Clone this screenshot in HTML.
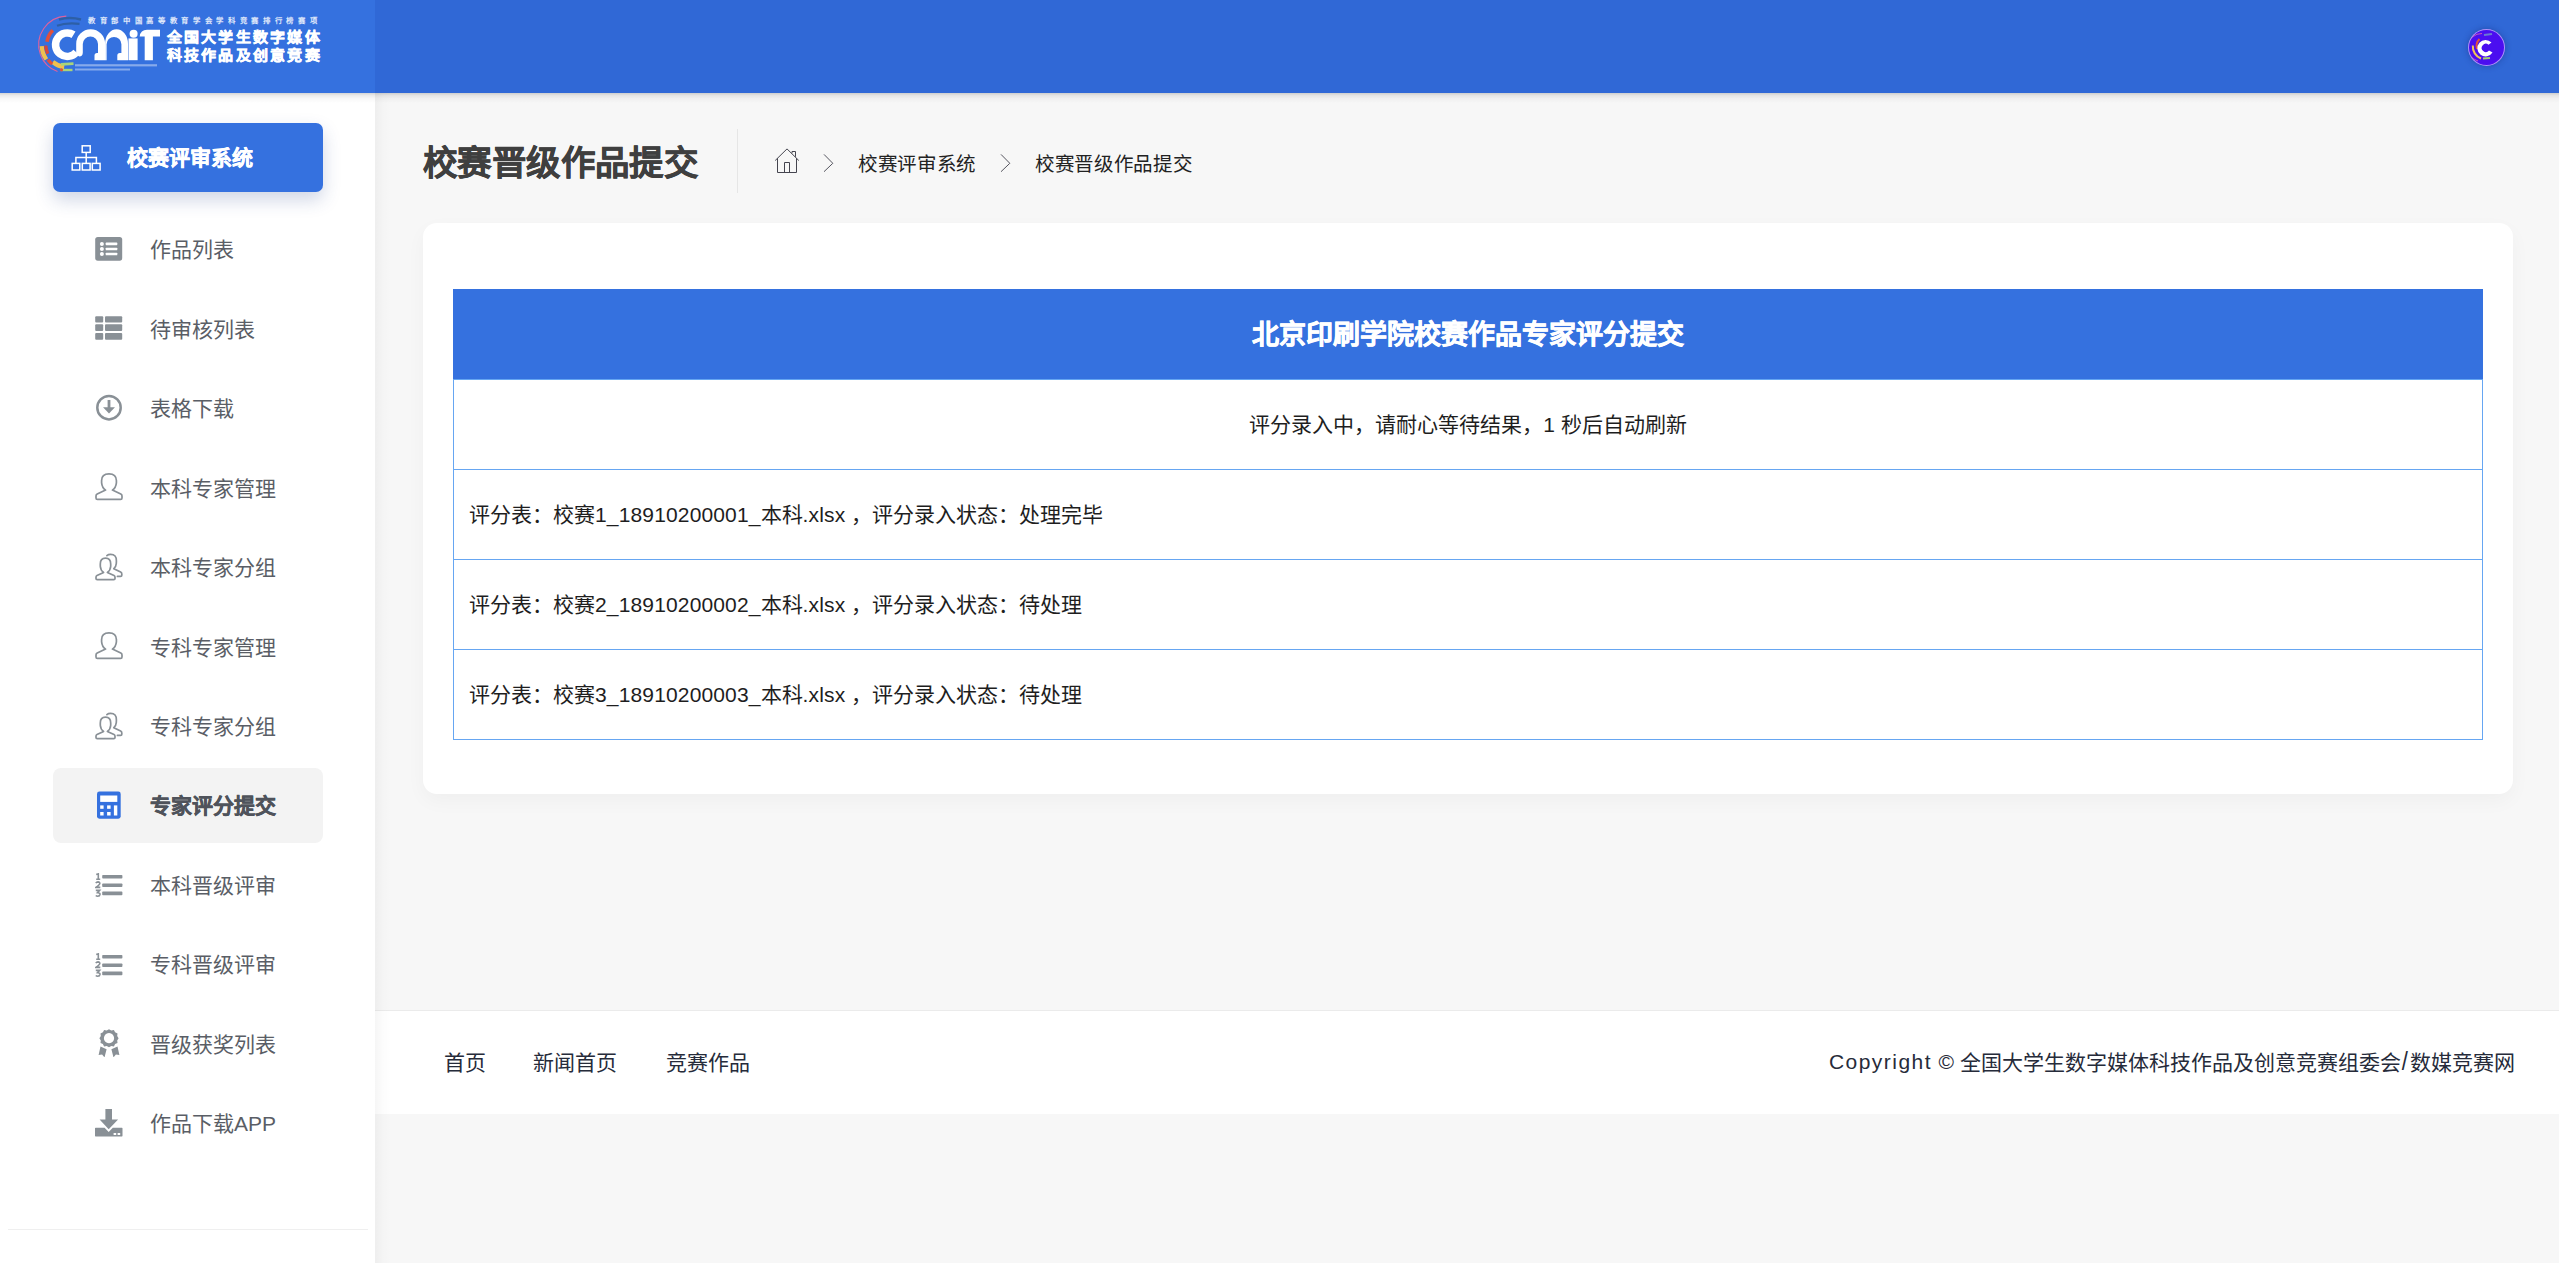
<!DOCTYPE html>
<html lang="zh-CN">
<head>
<meta charset="utf-8">
<style>
*{box-sizing:border-box;margin:0;padding:0}
html,body{width:2559px;height:1263px;overflow:hidden}
body{background:#f7f7f7;font-family:"Liberation Sans",sans-serif;position:relative;color:#333}
.abs{position:absolute}
#hdr-l{left:0;top:0;width:375px;height:93px;background:#3571df;z-index:5}
#hdr-r{left:375px;top:0;width:2184px;height:93px;background:#3068d6;z-index:5}
#hdr-shadow{left:0;top:93px;width:2559px;height:10px;z-index:6;background:linear-gradient(rgba(0,0,0,.17),rgba(0,0,0,.08) 25%,rgba(0,0,0,.03) 55%,rgba(0,0,0,0));}
#side{left:0;top:93px;width:375px;height:1170px;background:#fff;z-index:2}
#side-sh{left:375px;top:93px;width:16px;height:1170px;z-index:1;background:linear-gradient(90deg,rgba(0,0,0,.035),rgba(0,0,0,.012) 50%,rgba(0,0,0,0))}
.btn-main{left:53px;top:123px;width:270px;height:69px;border-radius:7px;background:#3571df;box-shadow:0 8px 18px rgba(40,70,140,.22);z-index:3}
.mt{font-size:21px;line-height:40px;color:#5a5e66;white-space:nowrap;z-index:4}
.mi{position:absolute;left:0;width:375px;height:40px;z-index:3}
.mi .t{position:absolute;left:150px;top:0;font-size:21px;line-height:40px;color:#5a5e66;white-space:nowrap}
.mi svg{position:absolute;left:95px}
.active-bg{left:53px;top:768px;width:270px;height:75px;border-radius:8px;background:#f3f3f3;z-index:2}
#side-line{left:8px;top:1229px;width:360px;height:1px;background:#efefef;z-index:3}
.title{left:423px;top:132.5px;font-size:34.5px;letter-spacing:0.4px;font-weight:bold;color:#3f3f3f;-webkit-text-stroke:0.5px #3f3f3f;line-height:60px;white-space:nowrap}
#divider{left:737px;top:129px;width:1px;height:64px;background:#e6e6e6}
.bc{font-size:19.5px;letter-spacing:-0.35px;color:#222;line-height:30px;white-space:nowrap;top:148.5px}
.card{left:423px;top:223px;width:2090px;height:571px;background:#fff;border-radius:14px;box-shadow:0 7px 20px rgba(0,0,0,.035)}
.tbl{left:453px;top:289px;width:2030px;height:451px}
.th{position:absolute;left:0;top:0;width:2030px;height:90px;background:#3571df;color:#fff;font-weight:bold;font-size:27px;text-align:center;line-height:92px;-webkit-text-stroke:0.6px #fff}
.tr{position:absolute;left:0;width:2030px;height:91px;border:1px solid #66a6f2;background:#fff;font-size:21px;color:#1e1e1e;line-height:89px;white-space:nowrap}
.lt{letter-spacing:0.15px}
.lg{z-index:7;font-size:15px;line-height:20px;font-weight:bold;color:#fff;letter-spacing:2.28px;-webkit-text-stroke:0.55px #fff;white-space:nowrap;transform:scaleY(.93);transform-origin:0 0}
.footer{left:375px;top:1010px;width:2184px;height:104px;background:#fff;border-top:1px solid #ebebeb}
.fl{font-size:21px;color:#262b3a;line-height:30px;white-space:nowrap;top:1048px}
</style>
</head>
<body>
<div id="hdr-l" class="abs"></div>
<div id="hdr-r" class="abs"></div>
<div id="hdr-shadow" class="abs"></div>
<div id="side" class="abs"></div>
<div id="side-sh" class="abs"></div>

<svg class="abs" style="left:0;top:0;z-index:7" width="375" height="93" viewBox="0 0 375 93">
<g fill="none"><path d="M66.30,16.12 A28.6,28.6 0 0 0 40.42,54.48" stroke="#e7609a" stroke-width="1.1" opacity="0.95"/><path d="M40.42,54.48 A28.6,28.6 0 0 0 57.52,71.58" stroke="#e7609a" stroke-width="1.1" opacity="0.95"/><path d="M52.80,30.20 A20.5,20.5 0 0 0 47.00,41.85" stroke="#e0503c" stroke-width="3.6" opacity="1"/><path d="M41.74,46.04 A25.6,25.6 0 0 0 46.33,59.38" stroke="#f0c050" stroke-width="4.2" opacity="1"/><path d="M45.81,45.45 A21.5,21.5 0 0 0 47.81,53.79" stroke="#d9473a" stroke-width="3.2" opacity="1"/><path d="M52.84,61.94 A22.5,22.5 0 0 0 64.17,66.98" stroke="#f0c050" stroke-width="4.4" opacity="1"/><path d="M47.99,59.78 A24.5,24.5 0 0 0 52.22,64.01" stroke="#e0503c" stroke-width="3.4" opacity="1"/>
<path d="M59,19.5 Q70,16.5 81,19.5" stroke="#2d5fa6" stroke-width="2.6"/>
<path d="M57,25.8 Q66,22.3 79.5,23.8" stroke="#2d5fa6" stroke-width="2.2"/>
<path d="M61,64.4 L73.5,63.6" stroke="#a9d47a" stroke-width="2.6"/>
<path d="M60.5,70 L72.5,70" stroke="#a9d47a" stroke-width="2.4"/>
</g>
<circle cx="61.5" cy="69.8" r="1.6" fill="#e0503c"/>
<g fill="#fff">
<path d="M75.5,31.56 A15.5,15.5 0 1 0 79.17,54.66 L73.43,49.84 A8,8 0 1 1 71.54,37.92 Z"/>
<path d="M76.2,54.6 L76.2,43.65 A14.45,14.45 0 0 1 105.1,43.65 L105.1,60.2 L94.5,60.2 L94.5,55.5 Q94.5,53 97,53 L98,53 L98,44 A7.6,7.6 0 0 0 82.8,44 L82.8,52.5 Q82.8,56.5 79.2,56.5 Z"/>
<path d="M105.1,43.65 A11.45,14.45 0 0 1 128,43.65 L128,60.2 L117.3,60.2 L117.3,55.5 Q117.3,53 119.8,53 L121.4,53 L121.4,44.3 A7.4,7.4 0 0 0 106.6,44.3 L106.6,60.2 L105.1,60.2 Z"/>
<rect x="128.5" y="38.4" width="9.1" height="21.8"/>
<circle cx="133.6" cy="33.8" r="4"/>
<path d="M139.7,36.4 Q140.5,29.7 147,29.7 L160,29.7 L160,36.4 L152.9,36.4 L152.9,60.2 L144.7,60.2 L144.7,36.4 Z"/>
</g>
<g fill="#fff" opacity=".4"><rect x="75" y="64.2" width="82" height="2.2"/><rect x="75" y="68.5" width="55" height="2"/></g>
</svg>
<div class="abs" style="left:88px;top:14px;z-index:7;font-size:7.4px;line-height:14px;font-weight:bold;color:rgba(255,255,255,.85);letter-spacing:4.67px;white-space:nowrap">教育部中国高等教育学会学科竞赛排行榜赛项</div>
<div class="abs lg" style="left:166.5px;top:28px">全国大学生数字媒体</div>
<div class="abs lg" style="left:166.5px;top:45.5px">科技作品及创意竞赛</div>
<div class="abs" style="left:2467.5px;top:28.5px;width:37px;height:37px;border-radius:50%;background:#4b0ef0;border:1px solid rgba(220,200,255,.7);box-shadow:0 0 6px rgba(20,40,120,.45);z-index:7;overflow:hidden">
<svg width="37" height="37" viewBox="0 0 37 37" style="position:absolute;left:-1px;top:-1px"><g fill="none">
<path d="M14,4.5 A14,14 0 0 0 10,32" stroke="#e86aa8" stroke-width="0.8"/>
<path d="M11.5,10 A10,10 0 0 0 9,20" stroke="#e0513f" stroke-width="2"/>
<path d="M4.8,16.5 A13,13 0 0 0 13,29.5" stroke="#f0c455" stroke-width="2"/>
<path d="M16,6 L24,5" stroke="#6a7ad0" stroke-width="2.2"/>
<path d="M15,29.5 L22,29" stroke="#a6d36f" stroke-width="1.8"/>
</g><path fill="#fff" fill-rule="evenodd" d="M23.5,13.6 A8.2,8.2 0 1 0 24.5,23.6 L21,21.6 A4.1,4.1 0 1 1 20.5,15.8 Z"/></svg>
</div>
<!-- main sidebar button -->
<div class="abs btn-main"></div>

<div class="abs active-bg"></div>
<div id="side-line" class="abs"></div>

<svg class="abs" style="left:71px;top:144px;z-index:4" width="30" height="28" viewBox="0 0 30 28"><g fill="none" stroke="#fff" stroke-width="1.5"><rect x="11.2" y="1.8" width="8" height="6.6"/><path d="M15.2,8.4 L15.2,13.6 M4.9,19.4 L4.9,13.6 L25.4,13.6 L25.4,19.4 M15.2,13.6 L15.2,19.4"/><rect x="1.2" y="19.4" width="7.6" height="6.6"/><rect x="11.3" y="19.4" width="7.8" height="6.6"/><rect x="21.3" y="19.4" width="7.8" height="6.6"/></g></svg>
<div class="abs" style="left:127px;top:138px;font-size:21px;line-height:40px;font-weight:bold;color:#fff;-webkit-text-stroke:0.45px #fff;z-index:4;white-space:nowrap">校赛评审系统</div>
<div class="abs" style="left:95px;top:236px;z-index:4;width:28px;height:28px"><svg width="28" height="28" viewBox="0 0 28 28"><rect x="0.2" y="1" width="27" height="23.7" rx="2.6" fill="#899096"/><circle cx="6.9" cy="7.9" r="2" fill="#fff"/><circle cx="6.9" cy="13" r="2" fill="#fff"/><circle cx="6.9" cy="18" r="2" fill="#fff"/><rect x="10.7" y="6.6" width="11.6" height="2.6" rx="0.6" fill="#fff"/><rect x="10.7" y="11.7" width="11.6" height="2.6" rx="0.6" fill="#fff"/><rect x="10.7" y="16.7" width="11.6" height="2.6" rx="0.6" fill="#fff"/></svg></div>
<div class="abs mt" style="left:150px;top:230.3px;">作品列表</div>
<div class="abs" style="left:95px;top:316px;z-index:4;width:28px;height:28px"><svg width="28" height="28" viewBox="0 0 28 28"><g fill="#899096"><rect x="0.2" y="0.3" width="8" height="6.2" rx="1"/><rect x="10" y="0.3" width="17.2" height="6.2" rx="1"/><rect x="0.2" y="8.3" width="8" height="6.7" rx="1"/><rect x="10" y="8.3" width="17.2" height="6.7" rx="1"/><rect x="0.2" y="17" width="8" height="6.8" rx="1"/><rect x="10" y="17" width="17.2" height="6.8" rx="1"/></g></svg></div>
<div class="abs mt" style="left:150px;top:309.7px;">待审核列表</div>
<div class="abs" style="left:95px;top:394px;z-index:4;width:28px;height:28px"><svg width="28" height="28" viewBox="0 0 28 28"><circle cx="14" cy="13.7" r="11.7" fill="none" stroke="#899096" stroke-width="2.5"/><rect x="12.6" y="6" width="2.8" height="8" fill="#899096"/><path d="M8 13.2 L20 13.2 L14 19.4 Z" fill="#899096"/></svg></div>
<div class="abs mt" style="left:150px;top:389.2px;">表格下载</div>
<div class="abs" style="left:95px;top:473px;z-index:4;width:28px;height:28px"><svg width="28" height="28" viewBox="0 0 28 28"><path d="M10.6,17.1 L2.2,21.1 Q1,21.7 1,23 L1,25 Q1,26.4 2.4,26.4 L25.6,26.4 Q27,26.4 27,25 L27,23 Q27,21.7 25.8,21.1 L17.4,17.1 Q20.9,14.6 21.4,9.8 L21.4,7.6 Q21.4,0.9 14,0.9 Q6.6,0.9 6.6,7.6 L6.6,9.8 Q7.1,14.6 10.6,17.1 Z" fill="none" stroke="#899096" stroke-width="1.7" stroke-linejoin="round"/></svg></div>
<div class="abs mt" style="left:150px;top:468.6px;">本科专家管理</div>
<div class="abs" style="left:95px;top:553px;z-index:4;width:28px;height:28px"><svg width="28" height="28" viewBox="0 0 28 28"><path d="M8.6,19.4 L2,22.6 Q1,23.1 1,24.3 L1,25.5 Q1,26.6 2.2,26.6 L18.8,26.6 Q20,26.6 20,25.5 L20,24.3 Q20,23.1 19,22.6 L12.4,19.4 Q15.4,17.4 15.7,13.2 L15.7,11 Q15.7,5.2 10.5,5.2 Q5.3,5.2 5.3,11 L5.3,13.2 Q5.6,17.4 8.6,19.4 Z" fill="none" stroke="#899096" stroke-width="1.7" stroke-linejoin="round"/><path d="M11.9,2.6 Q13.2,1.4 15.6,1.4 Q21.6,1.4 21.4,8 L21.3,10.5 Q21,14 18.8,15.7 L25.6,19.1 Q26.8,19.7 26.8,21 L26.8,22.2 Q26.8,23.4 25.6,23.4 L22.4,23.4" fill="none" stroke="#899096" stroke-width="1.7" stroke-linejoin="round" stroke-linecap="round"/></svg></div>
<div class="abs mt" style="left:150px;top:548.0px;">本科专家分组</div>
<div class="abs" style="left:95px;top:632px;z-index:4;width:28px;height:28px"><svg width="28" height="28" viewBox="0 0 28 28"><path d="M10.6,17.1 L2.2,21.1 Q1,21.7 1,23 L1,25 Q1,26.4 2.4,26.4 L25.6,26.4 Q27,26.4 27,25 L27,23 Q27,21.7 25.8,21.1 L17.4,17.1 Q20.9,14.6 21.4,9.8 L21.4,7.6 Q21.4,0.9 14,0.9 Q6.6,0.9 6.6,7.6 L6.6,9.8 Q7.1,14.6 10.6,17.1 Z" fill="none" stroke="#899096" stroke-width="1.7" stroke-linejoin="round"/></svg></div>
<div class="abs mt" style="left:150px;top:627.5px;">专科专家管理</div>
<div class="abs" style="left:95px;top:712px;z-index:4;width:28px;height:28px"><svg width="28" height="28" viewBox="0 0 28 28"><path d="M8.6,19.4 L2,22.6 Q1,23.1 1,24.3 L1,25.5 Q1,26.6 2.2,26.6 L18.8,26.6 Q20,26.6 20,25.5 L20,24.3 Q20,23.1 19,22.6 L12.4,19.4 Q15.4,17.4 15.7,13.2 L15.7,11 Q15.7,5.2 10.5,5.2 Q5.3,5.2 5.3,11 L5.3,13.2 Q5.6,17.4 8.6,19.4 Z" fill="none" stroke="#899096" stroke-width="1.7" stroke-linejoin="round"/><path d="M11.9,2.6 Q13.2,1.4 15.6,1.4 Q21.6,1.4 21.4,8 L21.3,10.5 Q21,14 18.8,15.7 L25.6,19.1 Q26.8,19.7 26.8,21 L26.8,22.2 Q26.8,23.4 25.6,23.4 L22.4,23.4" fill="none" stroke="#899096" stroke-width="1.7" stroke-linejoin="round" stroke-linecap="round"/></svg></div>
<div class="abs mt" style="left:150px;top:706.9px;">专科专家分组</div>
<div class="abs" style="left:95px;top:791px;z-index:4;width:28px;height:28px"><svg width="28" height="28" viewBox="0 0 28 28"><rect x="2" y="0.5" width="23.7" height="27.2" rx="2.4" fill="#3571df"/><g fill="#fff"><rect x="5.2" y="4.5" width="17.1" height="6.4"/><rect x="5.2" y="14.4" width="3.4" height="3.4"/><rect x="12.1" y="14.4" width="3.5" height="3.4"/><rect x="5.2" y="21" width="3.4" height="3.5"/><rect x="12.1" y="21" width="3.5" height="3.5"/><rect x="18.9" y="14.4" width="3.4" height="10.1"/></g></svg></div>
<div class="abs mt" style="left:150px;top:786.3px;font-weight:bold;color:#4f535b;-webkit-text-stroke:0.45px #4f535b;">专家评分提交</div>
<div class="abs" style="left:95px;top:872.5px;z-index:4;width:28px;height:28px"><svg width="28" height="28" viewBox="0 0 28 28"><g fill="#899096"><rect x="7.2" y="2" width="20.2" height="3.6" rx="0.8"/><rect x="7.2" y="10.4" width="20.2" height="3.6" rx="0.8"/><rect x="7.2" y="18.6" width="20.2" height="3.6" rx="0.8"/></g><g fill="none" stroke="#899096" stroke-width="1.6"><path d="M1.2,1.6 L3.3,0.9 L3.3,6.3 M1.2,6.3 L5.2,6.3"/><path d="M0.8,10.2 Q1.6,8.9 3,8.9 Q4.9,9 4.8,10.6 Q4.6,11.7 0.9,14.4 L5.3,14.4"/><path d="M0.8,17.4 L4.6,17.4 L2.6,19.6 Q5.1,19.7 5,21.4 Q4.8,23.2 2.8,23.2 Q1.5,23.2 0.8,22.5"/></g></svg></div>
<div class="abs mt" style="left:150px;top:865.7px;">本科晋级评审</div>
<div class="abs" style="left:95px;top:952.5px;z-index:4;width:28px;height:28px"><svg width="28" height="28" viewBox="0 0 28 28"><g fill="#899096"><rect x="7.2" y="2" width="20.2" height="3.6" rx="0.8"/><rect x="7.2" y="10.4" width="20.2" height="3.6" rx="0.8"/><rect x="7.2" y="18.6" width="20.2" height="3.6" rx="0.8"/></g><g fill="none" stroke="#899096" stroke-width="1.6"><path d="M1.2,1.6 L3.3,0.9 L3.3,6.3 M1.2,6.3 L5.2,6.3"/><path d="M0.8,10.2 Q1.6,8.9 3,8.9 Q4.9,9 4.8,10.6 Q4.6,11.7 0.9,14.4 L5.3,14.4"/><path d="M0.8,17.4 L4.6,17.4 L2.6,19.6 Q5.1,19.7 5,21.4 Q4.8,23.2 2.8,23.2 Q1.5,23.2 0.8,22.5"/></g></svg></div>
<div class="abs mt" style="left:150px;top:945.2px;">专科晋级评审</div>
<div class="abs" style="left:95px;top:1029px;z-index:4;width:28px;height:28px"><svg width="28" height="28" viewBox="0 0 28 28"><path d="M5.5,17.6 L11.6,20.2 L9.5,28.4 L7.1,25.6 L3.6,26.1 Z M22.5,17.6 L16.4,20.2 L18.5,28.4 L20.9,25.6 L24.4,26.1 Z" fill="#899096"/><path fill="#899096" fill-rule="evenodd" d="M14,0.2 L16.3,1.4 L18.9,1 L20.1,3.3 L22.5,4.4 L22.2,7 L23.6,9.2 L22.2,11.4 L22.5,14 L20.1,15.1 L18.9,17.4 L16.3,17 L14,18.2 L11.7,17 L9.1,17.4 L7.9,15.1 L5.5,14 L5.8,11.4 L4.4,9.2 L5.8,7 L5.5,4.4 L7.9,3.3 L9.1,1 L11.7,1.4 Z M14,4.1 A5.1,5.1 0 1 0 14.01,4.1 Z"/></svg></div>
<div class="abs mt" style="left:150px;top:1024.6px;">晋级获奖列表</div>
<div class="abs" style="left:95px;top:1109px;z-index:4;width:28px;height:28px"><svg width="28" height="28" viewBox="0 0 28 28"><path fill="#899096" d="M10.4,0 L17,0 L17,10.5 L23.1,10.5 L13.7,20.2 L4.6,10.5 L10.4,10.5 Z"/><path fill="#899096" fill-rule="evenodd" d="M0,19.2 Q0,18.7 0.6,18.7 L9.6,18.7 L13.7,22.9 L17.8,18.7 L26.9,18.7 Q27.5,18.7 27.5,19.2 L27.5,26.8 Q27.5,27.4 26.9,27.4 L0.6,27.4 Q0,27.4 0,26.8 Z M18.6,23.9 L21.2,23.9 L21.2,26 L18.6,26 Z M22.6,23.9 L25.2,23.9 L25.2,26 L22.6,26 Z"/></svg></div>
<div class="abs mt" style="left:150px;top:1104.0px;">作品下载APP</div>
<!-- title & breadcrumb -->
<div class="abs title">校赛晋级作品提交</div>
<div id="divider" class="abs"></div>
<div class="abs bc" style="left:858px">校赛评审系统</div>
<div class="abs bc" style="left:1035px">校赛晋级作品提交</div>

<svg class="abs" style="left:774px;top:147px" width="27" height="28" viewBox="0 0 27 28"><g fill="none" stroke="#45454f" stroke-width="1"><path d="M1.2,13.5 L13,1.9 L24.8,13.5"/><path d="M3.5,11.3 L3.5,25.5 L22.5,25.5 L22.5,11.3"/><path d="M10.5,25.5 L10.5,15.5 L15.5,15.5 L15.5,25.5"/><path d="M18,6.3 L18,4.5 L21.5,4.5 L21.5,9.8"/></g></svg>
<svg class="abs" style="left:821px;top:153px" width="14" height="21" viewBox="0 0 14 21"><path d="M3,1.4 L11.8,10.3 L3,18.7" fill="none" stroke="#55555f" stroke-width="1"/></svg>
<svg class="abs" style="left:998px;top:153px" width="14" height="21" viewBox="0 0 14 21"><path d="M3,1.4 L11.8,10.3 L3,18.7" fill="none" stroke="#55555f" stroke-width="1"/></svg>
<!-- card -->
<div class="abs card"></div>
<div class="abs tbl">
  <div class="th">北京印刷学院校赛作品专家评分提交</div>
  <div class="tr" style="top:90px;text-align:center">评分录入中，请耐心等待结果，1 秒后自动刷新</div>
  <div class="tr" style="top:180px;padding-left:15px">评分表：校赛<span class="lt">1_18910200001_</span>本科<span class="lt">.xlsx </span>，评分录入状态：处理完毕</div>
  <div class="tr" style="top:270px;padding-left:15px">评分表：校赛<span class="lt">2_18910200002_</span>本科<span class="lt">.xlsx </span>，评分录入状态：待处理</div>
  <div class="tr" style="top:360px;padding-left:15px">评分表：校赛<span class="lt">3_18910200003_</span>本科<span class="lt">.xlsx </span>，评分录入状态：待处理</div>
</div>

<!-- footer -->
<div class="abs footer"></div>
<div class="abs fl" style="left:444px">首页</div>
<div class="abs fl" style="left:533px">新闻首页</div>
<div class="abs fl" style="left:666px">竞赛作品</div>
<div class="abs fl" style="left:1829px;top:1046.8px;letter-spacing:1.45px">Copyright</div><div class="abs fl" style="left:1938.5px;top:1047.3px">©</div><div class="abs fl" style="left:1960px;top:1047.5px">全国大学生数字媒体科技作品及创意竞赛组委会<span style="letter-spacing:0;margin-left:0.5px;margin-right:2.5px;display:inline-block;transform:scale(1.05,1.2);transform-origin:50% 80%">/</span>数媒竞赛网</div>

</body>
</html>
